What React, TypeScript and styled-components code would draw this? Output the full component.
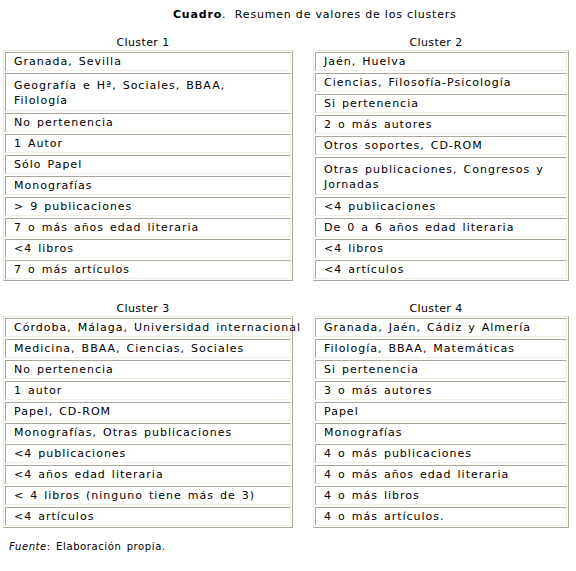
import React from "react";
import styled, { createGlobalStyle } from "styled-components";

const Global = createGlobalStyle`
  html, body { margin: 0; padding: 0; background: #ffffff; }
  body {
    font-family: "DejaVu Sans", Verdana, sans-serif;
    font-size: 11px;
    letter-spacing: 1px;
    word-spacing: 1.5px;
    color: #000;
  }
`;

const Page = styled.div`
  width: 576px;
  padding: 7px 0 0 3px;
  box-sizing: border-box;
`;

const Title = styled.p`
  margin: 0 0 13px 170px;
  line-height: 15px;
  letter-spacing: 0.8px;
  word-spacing: 0;
  b { font-weight: bold; }
`;

const Grid = styled.div`
  display: grid;
  grid-template-columns: 290px 256px;
  column-gap: 20px;
  row-gap: 20px;
`;

const Block = styled.div`
  display: flex;
  flex-direction: column;
`;

const Caption = styled.div`
  text-align: center;
  line-height: 15px;
  padding-right: 10px;
  letter-spacing: 0.4px;
  word-spacing: 0;
`;

const Table = styled.div`
  display: flex;
  flex-direction: column;
  gap: 2px;
  padding: 1px;
  border: 1px solid;
  border-color: #ece9d8 #aca899 #aca899 #ece9d8;
`;

const Cell = styled.div<{ $tall?: boolean }>`
  border: 1px solid;
  border-color: #aca899 #f1efe2 #f1efe2 #aca899;
  padding: ${(p) => (p.$tall ? "4px 8px 2px" : "1px 8px")};
  line-height: 15px;
  white-space: nowrap;
`;

const Note = styled.p`
  margin: 11px 0 0 6px;
  line-height: 15px;
  font-size: 10px;
  letter-spacing: 0.6px;
  i { font-style: italic; }
`;

type Row = { text: React.ReactNode; tall?: boolean };
type Cluster = { name: string; rows: Row[] };

const r = (text: string): Row => ({ text });

const clusters: Cluster[] = [
  {
    name: "Cluster 1",
    rows: [
      r("Granada, Sevilla"),
      { text: <>Geografía e Hª, Sociales, BBAA,<br />Filología</>, tall: true },
      r("No pertenencia"),
      r("1 Autor"),
      r("Sólo Papel"),
      r("Monografías"),
      r("> 9 publicaciones"),
      r("7 o más años edad literaria"),
      r("<4 libros"),
      r("7 o más artículos"),
    ],
  },
  {
    name: "Cluster 2",
    rows: [
      r("Jaén, Huelva"),
      r("Ciencias, Filosofía-Psicología"),
      r("Si pertenencia"),
      r("2 o más autores"),
      r("Otros soportes, CD-ROM"),
      { text: <>Otras publicaciones, Congresos y<br />Jornadas</>, tall: true },
      r("<4 publicaciones"),
      r("De 0 a 6 años edad literaria"),
      r("<4 libros"),
      r("<4 artículos"),
    ],
  },
  {
    name: "Cluster 3",
    rows: [
      r("Córdoba, Málaga, Universidad internacional"),
      r("Medicina, BBAA, Ciencias, Sociales"),
      r("No pertenencia"),
      r("1 autor"),
      r("Papel, CD-ROM"),
      r("Monografías, Otras publicaciones"),
      r("<4 publicaciones"),
      r("<4 años edad literaria"),
      r("< 4 libros (ninguno tiene más de 3)"),
      r("<4 artículos"),
    ],
  },
  {
    name: "Cluster 4",
    rows: [
      r("Granada, Jaén, Cádiz y Almería"),
      r("Filología, BBAA, Matemáticas"),
      r("Si pertenencia"),
      r("3 o más autores"),
      r("Papel"),
      r("Monografías"),
      r("4 o más publicaciones"),
      r("4 o más años edad literaria"),
      r("4 o más libros"),
      r("4 o más artículos."),
    ],
  },
];

export default function App() {
  return (
    <Page>
      <Global />
      <Title>
        <b>Cuadro</b>.&nbsp; Resumen de valores de los clusters
      </Title>
      <Grid>
        {clusters.map((c) => (
          <Block key={c.name}>
            <Caption>{c.name}</Caption>
            <Table>
              {c.rows.map((row, i) => (
                <Cell key={i} $tall={row.tall}>
                  {row.text}
                </Cell>
              ))}
            </Table>
          </Block>
        ))}
      </Grid>
      <Note>
        <i>Fuente</i>: Elaboración propia.
      </Note>
    </Page>
  );
}
